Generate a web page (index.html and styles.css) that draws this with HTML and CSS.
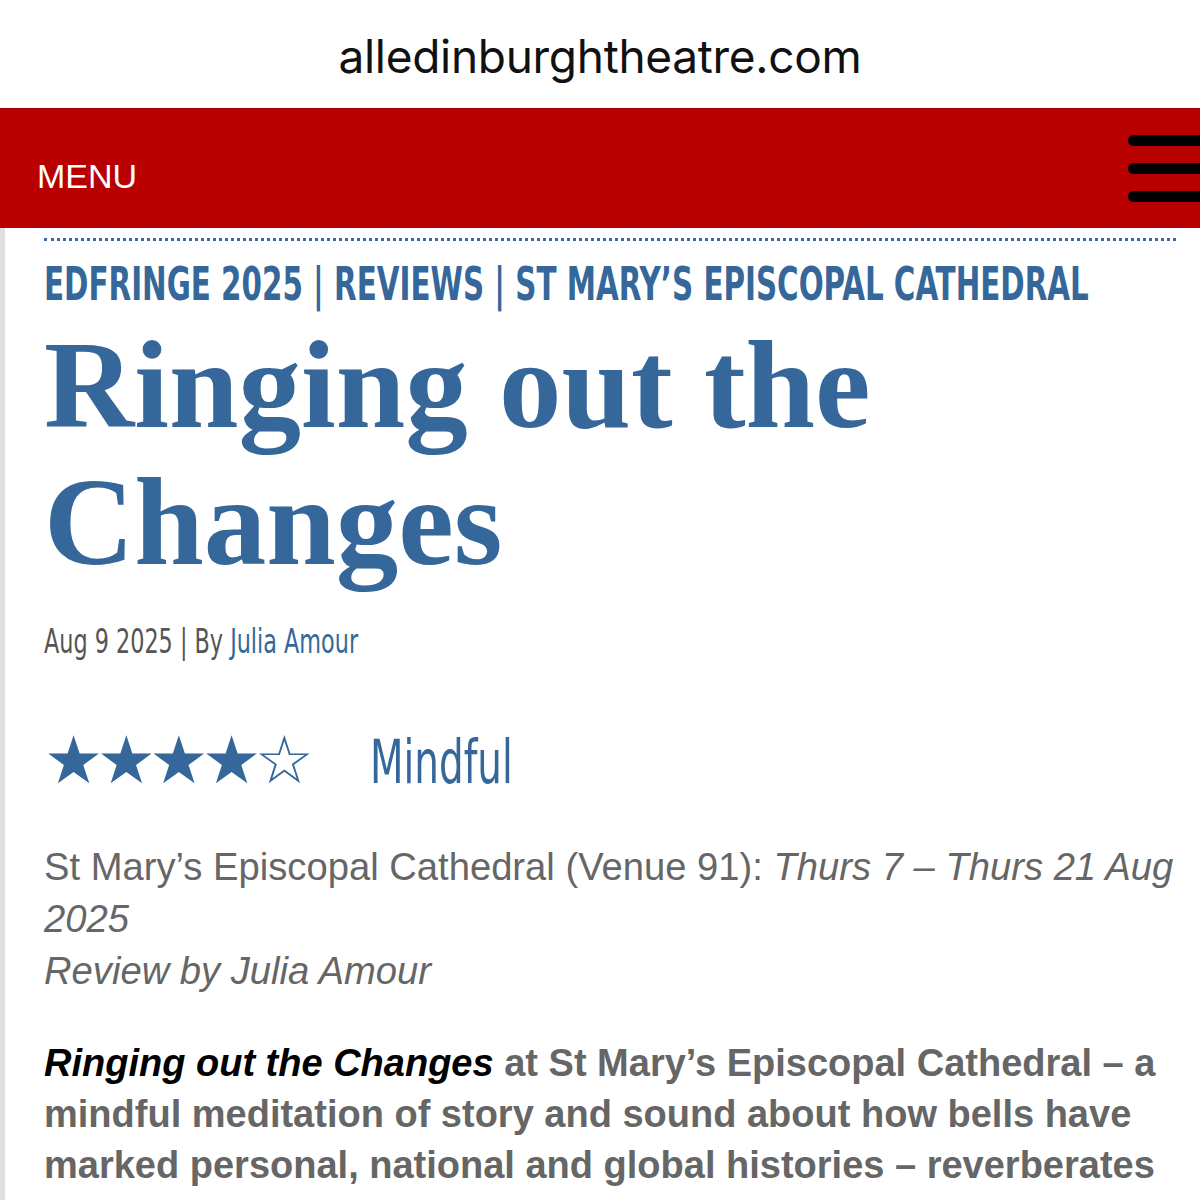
FILE: index.html
```html
<!DOCTYPE html>
<html lang="en">
<head>
  <meta charset="UTF-8">
  <title>Ringing out the Changes – All Edinburgh Theatre</title>
  <link rel="stylesheet" href="styles.css">
</head>
<body>
  <header class="urlbar">alledinburghtheatre.com</header>

  <nav class="menubar">
    <span class="menu-label">MENU</span>
    <span class="burger"><i></i><i></i><i></i></span>
  </nav>

  <main class="page">
    <div class="rule"></div>
    <div class="cats">
      <a href="#">EdFringe 2025</a> | <a href="#">Reviews</a> | <a href="#">St Mary’s Episcopal Cathedral</a>
    </div>

    <h1 class="title">Ringing out the Changes</h1>

    <div class="byline">Aug 9 2025 | By <a href="#">Julia Amour</a></div>

    <div class="rating">
      <span class="stars">★★★★☆</span>
      <span class="verdict">Mindful</span>
    </div>

    <p class="venue">St Mary’s Episcopal Cathedral (Venue 91): <em>Thurs 7 – Thurs 21 Aug 2025<br>Review by Julia Amour</em></p>

    <p class="lead"><strong class="show">Ringing out the Changes</strong> at St Mary’s Episcopal Cathedral – a mindful meditation of story and sound about how bells have marked personal, national and global histories – reverberates</p>
  </main>
</body>
</html>
```

FILE: styles.css
```css
body { margin: 0; background: #fff; font-family: "Liberation Sans", Arial, sans-serif; overflow: hidden; }
a { color: inherit; text-decoration: none; }

.urlbar { height: 108px; display: flex; align-items: center; justify-content: center; font-family: Inter, Roboto, sans-serif; font-size: 46px; color: #111; letter-spacing: -0.3px; padding-top: 4px; box-sizing: border-box; }

.menubar { height: 120px; background: #b80000; border-top: 1px solid #9a0000; box-sizing: border-box; display: flex; align-items: center; justify-content: space-between; overflow: hidden; }
.menu-label { color: #fff; font-size: 34px; padding-left: 37px; padding-top: 16px; }
.burger { display: flex; flex-direction: column; gap: 17px; margin-right: -30px; }
.burger i { display: block; width: 102px; height: 11px; background: #000; border-radius: 6px; }

/* no Oswald offline, so the condensed bits squeeze DejaVu Sans Condensed */
.page { border-left: 5px solid #e0e0e0; padding: 10px 24px 0 39px; min-height: 1000px; }
.rule { border-top: 3px dotted #3a6b9c; }

.cats { margin-top: 19px; font-family: "DejaVu Sans Condensed", sans-serif; font-weight: bold; font-size: 46px; line-height: 48px; text-transform: uppercase; color: #35679a; white-space: nowrap; transform: scaleX(0.71); transform-origin: left; }

.title { margin: 9px 0 0; font-family: "Liberation Serif", serif; font-weight: bold; font-size: 125px; line-height: 137px; color: #35679a; }

.byline { margin-top: 30px; font-family: "DejaVu Sans Condensed", sans-serif; font-size: 34px; line-height: 40px; color: #555; white-space: nowrap; transform: scaleX(0.73); transform-origin: left; }
.byline a { color: #35679a; }

.rating { display: flex; align-items: baseline; margin-top: 67px; color: #35679a; }
.stars { font-family: "DejaVu Sans", sans-serif; font-size: 66px; line-height: 66px; letter-spacing: -6.5px; margin-right: 63px; }
.verdict { font-family: "DejaVu Sans Condensed", sans-serif; font-size: 60px; line-height: 60px; transform: scaleX(0.72); transform-origin: left; }

.venue { margin: 47px 0 0; font-size: 38.2px; line-height: 52px; color: #666; }
.lead { margin: 41px 0 0; font-size: 38px; line-height: 51px; font-weight: bold; color: #666; }
.lead .show { font-style: italic; color: #000; }
```
